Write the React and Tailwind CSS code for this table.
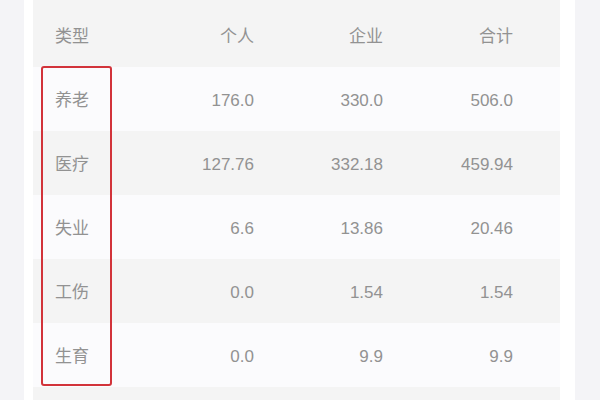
import React from 'react'

const ROWS = [
  { type: '养老', personal: '176.0', company: '330.0', total: '506.0' },
  { type: '医疗', personal: '127.76', company: '332.18', total: '459.94' },
  { type: '失业', personal: '6.6', company: '13.86', total: '20.46' },
  { type: '工伤', personal: '0.0', company: '1.54', total: '1.54' },
  { type: '生育', personal: '0.0', company: '9.9', total: '9.9' },
]

function Row({ cells, white, height }) {
  return (
    <div className={`flex items-center ${height} ${white ? 'bg-[#fbfbfd]' : ''}`}>
      <div className="w-[92px] pl-[22px]">{cells[0]}</div>
      <div className="w-[129px] text-right">{cells[1]}</div>
      <div className="w-[129px] text-right">{cells[2]}</div>
      <div className="w-[130px] text-right">{cells[3]}</div>
    </div>
  )
}

export default function App() {
  return (
    <div className="flex h-[400px] w-[600px] overflow-hidden bg-[#f4f4f7]">
      <div className="ml-[24px] w-[551px] h-full bg-white pl-[9px] pr-[15px]">
        <div
          className="relative h-full bg-[#f4f4f4] text-[17px] text-[#929292]"
          style={{ fontFamily: '"Liberation Sans", "Noto Sans CJK SC", sans-serif' }}
        >
          <Row cells={['类型', '个人', '企业', '合计']} height="h-[67px] pt-[6px]" />
          {ROWS.map((r, i) => (
            <Row
              key={r.type}
              white={i % 2 === 0}
              height="h-[64px] pt-[3px]"
              cells={[r.type, r.personal, r.company, r.total]}
            />
          ))}
          {/* red highlight box */}
          <div className="absolute left-[8px] top-[66px] w-[71px] h-[320px] border-2 border-[#d2333a] rounded-[3px]" />
        </div>
      </div>
    </div>
  )
}
